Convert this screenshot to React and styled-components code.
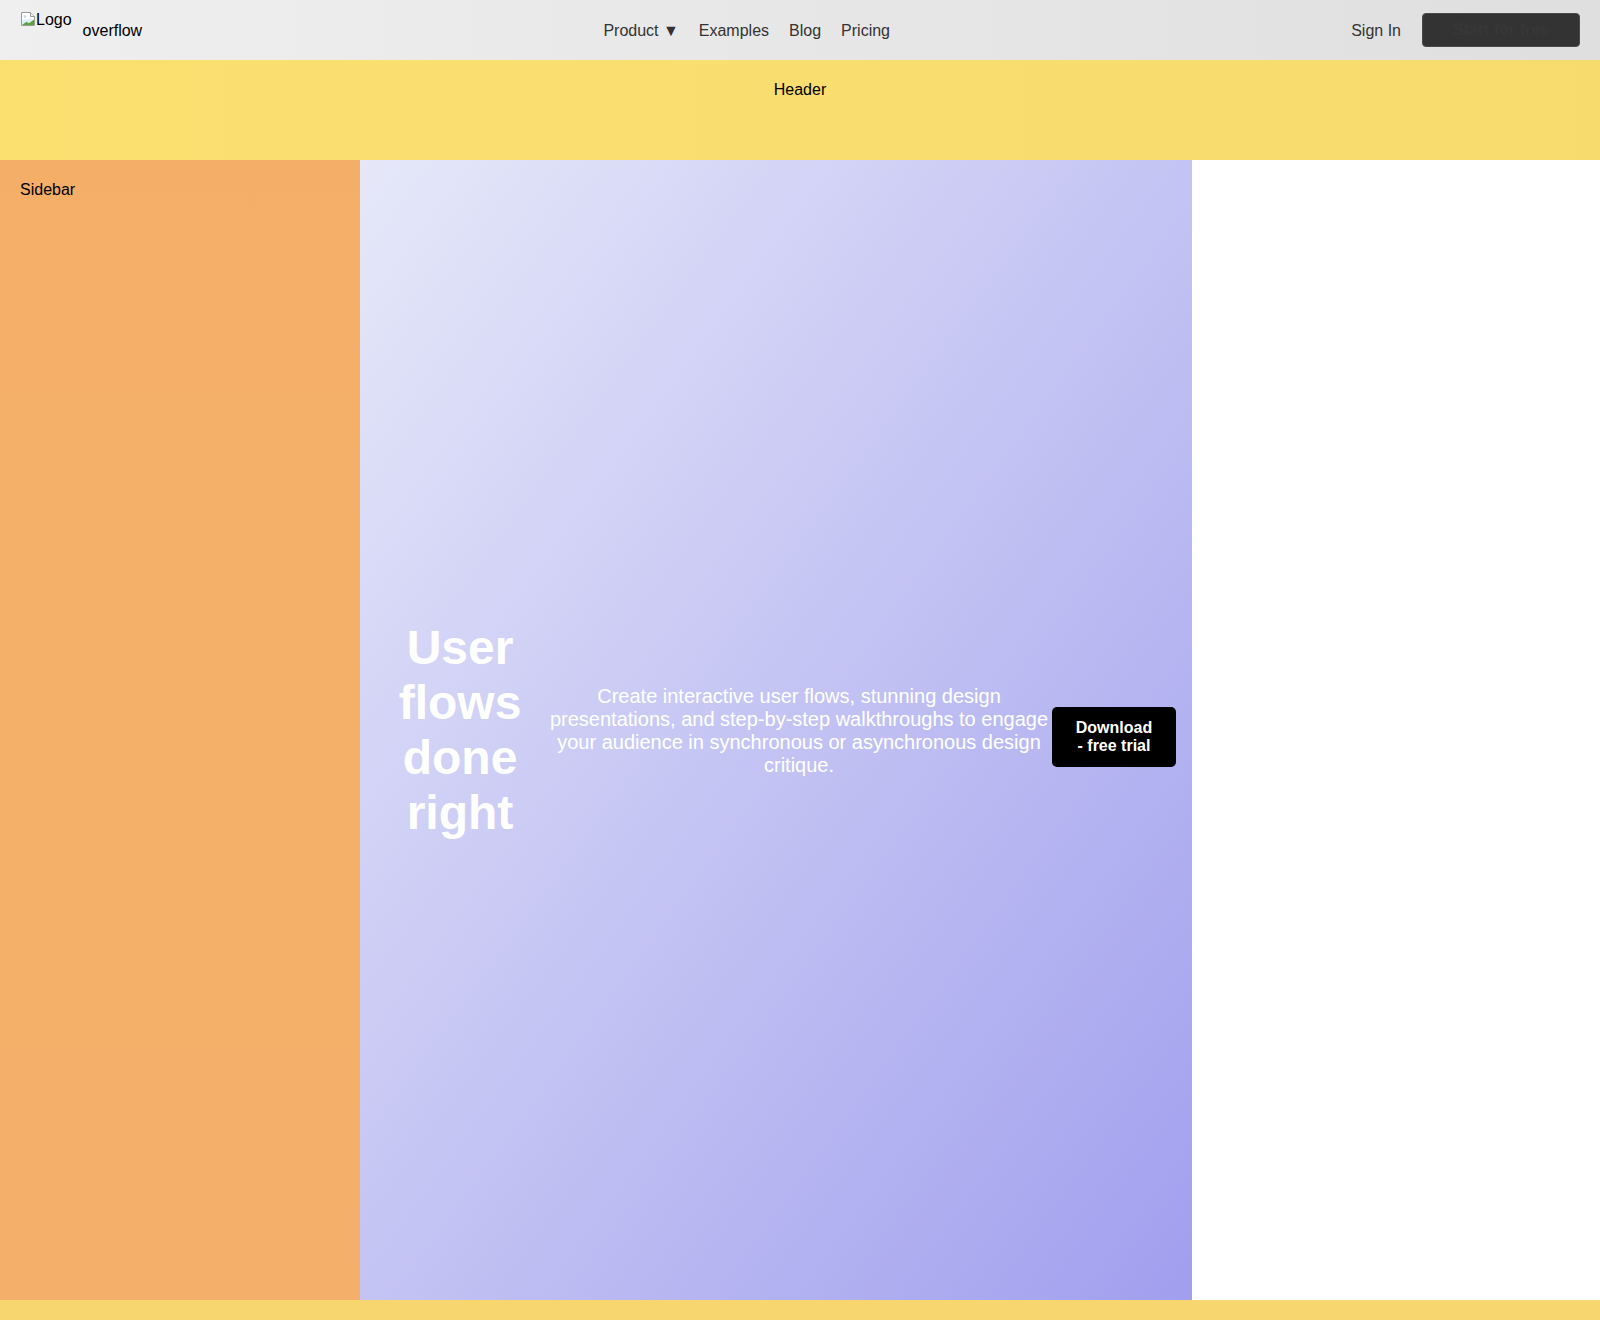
import React from 'react'
import styled, { createGlobalStyle } from 'styled-components'

const GlobalStyle = createGlobalStyle`
  html, body {
    margin: 0;
    padding: 0;
  }
  body {
    font-family: "Liberation Sans", Arial, sans-serif;
    font-size: 16px;
    color: #000;
    background: #fff;
  }
  * {
    box-sizing: border-box;
  }
`

function BrokenImage() {
  return (
    <svg width="16" height="16" viewBox="0 0 16 16">
      <path d="M1.5 1.5h9l4 4v9h-13z" fill="#fff" stroke="#9a9a9a" />
      <path d="M10.5 1.5v4h4" fill="#eee" stroke="#9a9a9a" />
      <path d="M2 9.5c2-1.6 3.6-1.4 5.2-0.4L10 7l4 3v4H2z" fill="#dfeef9" />
      <path d="M2 14l4.5-3.2 2.4 1.4L14 8.6V14z" fill="#5aa53b" />
      <circle cx="5" cy="5.5" r="1.4" fill="#c8e0f2" />
    </svg>
  )
}

function App() {
  return (
    <>
      <GlobalStyle />
      <Page>
        <Nav>
          <Brand>
            <Logo>
              <BrokenImage />
              <span>Logo</span>
            </Logo>
            <BrandName>overflow</BrandName>
          </Brand>
          <NavLinks>
            <NavLink>Product ▼</NavLink>
            <NavLink>Examples</NavLink>
            <NavLink>Blog</NavLink>
            <NavLink>Pricing</NavLink>
          </NavLinks>
          <NavRight>
            <NavLink>Sign In</NavLink>
            <SignUpButton>Start for free</SignUpButton>
          </NavRight>
        </Nav>
        <Header>Header</Header>
        <Body>
          <Sidebar>Sidebar</Sidebar>
          <Main>
            <Hero>
              <Title>User flows done right</Title>
              <Lead>
                Create interactive user flows, stunning design presentations, and step-by-step
                walkthroughs to engage your audience in synchronous or asynchronous design critique.
              </Lead>
              <CtaButton>Download - free trial</CtaButton>
            </Hero>
          </Main>
          <Aside />
        </Body>
        <Footer />
      </Page>
    </>
  )
}

export default App

const Page = styled.div`
  min-height: 100vh;
  display: grid;
  grid-template-rows: 60px 100px 1fr 20px;
`
const Nav = styled.nav`
  display: flex;
  justify-content: space-between;
  align-items: center;
  padding: 2px 20px 0;
  background: linear-gradient(90deg, #efefef 0%, #dfdfdf 100%);
`
const Brand = styled.div`
  display: flex;
  align-items: center;
  height: 100%;
`
const Logo = styled.div`
  align-self: flex-start;
  margin-top: 9px;
  display: flex;
  align-items: flex-start;
  line-height: 18px;
  margin-right: 11px;
  color: #000;
`
const BrandName = styled.span`
  color: #000;
  line-height: 18px;
`
const NavLinks = styled.div`
  display: flex;
  align-items: center;
  gap: 20px;
`
const NavLink = styled.a`
  color: #333;
  font-size: 16px;
  text-decoration: none;
  cursor: pointer;
`
const NavRight = styled.div`
  display: flex;
  align-items: center;
  gap: 21px;
`
const SignUpButton = styled.button`
  width: 158px;
  height: 34px;
  margin-top: -2px;
  border: 1px solid #4a4a4a;
  border-radius: 4px;
  background: #333;
  color: #373737;
  font-family: inherit;
  font-size: 16px;
  font-weight: bold;
`
const Header = styled.header`
  padding: 21px 20px 20px;
  text-align: center;
  background: linear-gradient(90deg, #fbe070 0%, #f8db6d 100%);
`
const Body = styled.div`
  display: grid;
  grid-template-columns: 360px 832px 1fr;
`
const Sidebar = styled.aside`
  padding: 21px 20px 20px;
  background: linear-gradient(180deg, #f4ae67 0%, #f4b06a 100%);
`
const Main = styled.main`
  display: flex;
  align-items: center;
  background: linear-gradient(to bottom right, #e6e8f9 0%, #a19fee 100%);
`
const Hero = styled.section`
  display: flex;
  align-items: center;
  padding: 0 16px 0 38px;
  color: #fff;
`
const Title = styled.h1`
  width: 124px;
  margin: 0 27px 0 0;
  flex-shrink: 0;
  font-size: 48px;
  font-weight: bold;
  line-height: 1.15;
  text-align: center;
`
const Lead = styled.p`
  width: 500px;
  margin: 2px 3px 0 0;
  flex-shrink: 0;
  font-size: 20px;
  line-height: 23px;
  text-align: center;
`
const CtaButton = styled.button`
  width: 124px;
  flex-shrink: 0;
  margin-top: 14px;
  padding: 12px 20px;
  border: none;
  border-radius: 5px;
  background: #000;
  color: #fff;
  font-family: inherit;
  font-size: 16px;
  font-weight: bold;
  line-height: 18.4px;
  cursor: pointer;
`
const Aside = styled.div`
  background: #fff;
`
const Footer = styled.footer`
  background: #f7d56f;
`
